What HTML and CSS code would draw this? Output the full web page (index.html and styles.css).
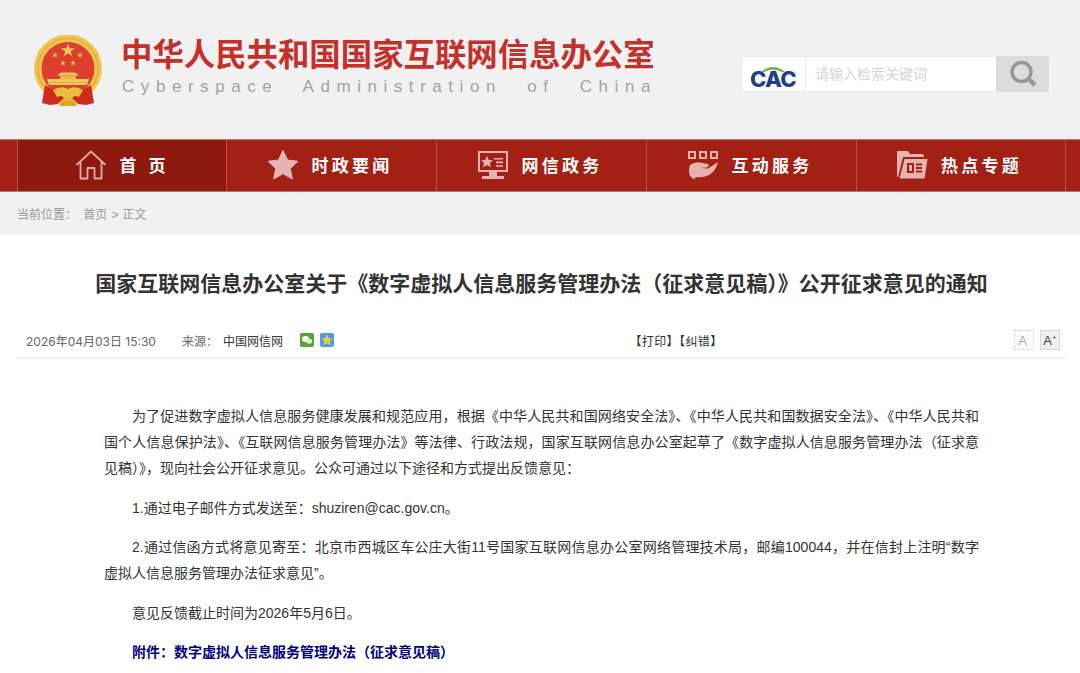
FILE: index.html
```html
<!DOCTYPE html>
<html lang="zh-CN">
<head>
  <meta charset="UTF-8" />
  <meta name="viewport" content="width=device-width, initial-scale=1.0"/>
  <title>国家互联网信息办公室</title>
  <link rel="stylesheet" href="styles.css">
</head>
<body>

  <header class="top">
    <div class="brand">
      <svg class="emblem" viewBox="0 0 68 72" width="68" height="72">
        <defs>
          <polygon id="small-star" points="0,-3 .67,-.93 2.85,-.93 1.09,.35 1.76,2.43 0,1.14 -1.76,2.43 -1.09,.35 -2.85,-.93 -.67,-.93" fill="#efc75a"/>
        </defs>
        <circle cx="34" cy="33.5" r="34" fill="#eec552"/>
        <circle cx="34" cy="33.5" r="30" fill="none" stroke="#e0ab33" stroke-width="1.2"/>
        <circle cx="34" cy="33.5" r="26.5" fill="#dc3f2e"/>
        <polygon points="34,8 35.7,13.2 41.1,13.2 36.7,16.4 38.4,21.6 34,18.35 29.6,21.6 31.3,16.4 26.9,13.2 32.3,13.2" fill="#efc75a"/>
        <use href="#small-star" x="21" y="20"/>
        <use href="#small-star" x="46" y="20"/>
        <use href="#small-star" x="29" y="28"/>
        <use href="#small-star" x="39" y="28"/>
        <path d="M23 40.5 L27 37.5 H41 L45 40.5 Z" fill="#f0ca62"/>
        <path d="M26 40.5 H42 V44 H26 Z" fill="#e8b844"/>
        <path d="M13 44 H55 L53 50 H15 Z" fill="#f0ca62"/>
        <path d="M15 47 H53 V48 H15 Z" fill="#e0ab33"/>
        <path d="M11 50 L8 68 L16 70 L24 69 L30 63 L20 55 Z" fill="#cf2a1e"/>
        <path d="M57 50 L60 68 L52 70 L44 69 L38 63 L48 55 Z" fill="#cf2a1e"/>
        <path d="M19 55 Q27 50 34 54 Q41 50 49 55 L45 62 L38 60 L34 64 L30 60 L23 62 Z" fill="#ecbc40"/>
        <path d="M27 65 H41 L43 71 H25 Z" fill="#e2a62f"/>
      </svg>
      <div class="brand-text">
        <div class="brand-cn">中华人民共和国国家互联网信息办公室</div>
        <div class="brand-en">Cyberspace Administration of China</div>
      </div>
    </div>
    <div class="search">
      <div class="search-logo">
        <svg class="search-arc" viewBox="0 0 26 7" width="26" height="7">
          <path d="M1 7 Q13 -3 25 7 L22 7 Q13 2 4 7 Z" fill="#6cb33f"/>
        </svg>
        <span class="search-cac">CAC</span>
      </div>
      <div class="search-input">请输入检索关键词</div>
      <div class="search-btn">
        <svg viewBox="0 0 28 28" width="28" height="28">
          <circle cx="12.5" cy="12" r="9.5" fill="none" stroke="#969696" stroke-width="3.4"/>
          <path d="M20.5 20 L26 25" stroke="#969696" stroke-width="4.4"/>
        </svg>
      </div>
    </div>
  </header>

  <nav class="nav">
    <a class="nav-item active">
      <svg viewBox="0 0 32 30" width="32" height="30">
        <path d="M1.5 15 L16 1.5 L30.5 15 M5.5 12 V28.5 H12.5 V18 H19.5 V28.5 H26.5 V12" fill="none" stroke="#e2aaa6" stroke-width="1.8" stroke-linejoin="round"/>
      </svg>
      <span class="nav-label home">首页</span>
    </a>
    <a class="nav-item">
      <svg viewBox="0 0 32 32" width="32" height="32">
        <path d="M16 1.5 L20.6 11 L31 12.3 L23.4 19.5 L25.4 30 L16 24.8 L6.6 30 L8.6 19.5 L1 12.3 L11.4 11 Z" fill="#e5b3b0" stroke="#e5b3b0" stroke-linejoin="round"/>
      </svg>
      <span class="nav-label">时政要闻</span>
    </a>
    <a class="nav-item">
      <svg viewBox="0 0 32 30" width="32" height="30">
        <path d="M1 1 H31 V22 H1 Z M3 3 V20 H29 V3 Z" fill="#e5b3b0" fill-rule="evenodd"/>
        <polygon points="10,6 11.8,10 16,10.3 12.8,13 14,17.2 10,15 6,17.2 7.2,13 4,10.3 8.2,10" fill="#e5b3b0"/>
        <path d="M17 8 H26 V9.6 H17 Z M19 11.6 H26 V13.2 H19 Z M19 15.2 H26 V16.8 H19 Z" fill="#e5b3b0"/>
        <path d="M12 22 H20 V26 H12 Z M5 26 H27 V29 H5 Z" fill="#e5b3b0"/>
      </svg>
      <span class="nav-label">网信政务</span>
    </a>
    <a class="nav-item">
      <svg viewBox="0 0 32 30" width="32" height="30">
        <path d="M1 1 H9 V9 H1 Z M3 3 V7 H7 V3 Z M12 1 H20 V9 H12 Z M14 3 V7 H18 V3 Z M23 1 H31 V9 H23 Z M25 3 V7 H29 V3 Z" fill="#e5b3b0" fill-rule="evenodd"/>
        <path d="M3 15 Q9 11 15 13 L21 14 Q23 15.5 20 17.5 L13 18 L21 18.5 L31 12 Q29 21 22 25 Q16 28 9 27 L7 29.5 L3 26 Q1 20 3 15 Z" fill="#e5b3b0"/>
      </svg>
      <span class="nav-label">互动服务</span>
    </a>
    <a class="nav-item">
      <svg viewBox="0 0 32 30" width="32" height="30">
        <path d="M1 1 H12 L14 4 H26 Q28 4 28 7 H7 L2 27 L1 27 Z" fill="#e5b3b0"/>
        <path d="M8.5 9 H31.5 L28.5 28.5 H3.5 Z" fill="#e5b3b0"/>
        <path d="M11 13 H18 V23 H11 Z M13 15 V21 H16 V15 Z" fill="#a32014" fill-rule="evenodd"/>
        <path d="M20 13.5 H26 V15.5 H20 Z M20 17 H26 V19 H20 Z M20 20.5 H26 V22.5 H20 Z" fill="#a32014"/>
      </svg>
      <span class="nav-label">热点专题</span>
    </a>
  </nav>

  <div class="crumb">
    <span class="crumb-label">当前位置：</span>
    <span class="crumb-path">首页 &gt; 正文</span>
  </div>

  <main class="article">
    <h1>国家互联网信息办公室关于《数字虚拟人信息服务管理办法（征求意见稿）》公开征求意见的通知</h1>

    <div class="meta">
      <div class="meta-left">
        <span class="meta-date">2026年04月03日 15:30</span>
        <span class="meta-src">来源：</span>
        <span class="meta-name">中国网信网</span>
        <span class="share share-wx">
          <svg viewBox="0 0 14 14" width="14" height="14">
            <ellipse cx="5.6" cy="6" rx="3.6" ry="3" fill="#fff"/>
            <ellipse cx="9.2" cy="8.2" rx="2.9" ry="2.4" fill="#e4f2dc"/>
          </svg>
        </span>
        <span class="share share-qq">
          <svg viewBox="0 0 14 14" width="14" height="14">
            <polygon points="7,1.5 8.7,5.2 12.7,5.6 9.7,8.3 10.6,12.3 7,10.2 3.4,12.3 4.3,8.3 1.3,5.6 5.3,5.2" fill="#f6c944"/>
          </svg>
        </span>
      </div>
      <div class="meta-mid">【打印】【纠错】</div>
      <div class="meta-right">
        <span class="font-btn minus">A<sup>-</sup></span>
        <span class="font-btn plus">A<sup>+</sup></span>
      </div>
    </div>

    <div class="body">
      <p>为了促进数字虚拟人信息服务健康发展和规范应用，根据《中华人民共和国网络安全法》、《中华人民共和国数据安全法》、《中华人民共和国个人信息保护法》、《互联网信息服务管理办法》等法律、行政法规，国家互联网信息办公室起草了《数字虚拟人信息服务管理办法（征求意见稿）》，现向社会公开征求意见。公众可通过以下途径和方式提出反馈意见：</p>
      <p>1.通过电子邮件方式发送至：shuziren@cac.gov.cn。</p>
      <p>2.通过信函方式将意见寄至：北京市西城区车公庄大街11号国家互联网信息办公室网络管理技术局，邮编100044，并在信封上注明“数字虚拟人信息服务管理办法征求意见”。</p>
      <p>意见反馈截止时间为2026年5月6日。</p>
      <p class="attach">附件：数字虚拟人信息服务管理办法（征求意见稿）</p>
    </div>
  </main>

</body>
</html>
```

FILE: styles.css
```css
body {
  margin: 0;
  font-family: "Liberation Sans", "Noto Sans CJK SC", sans-serif;
  background-color: #fff;
  color: #333;
}

.top {
  height: 139px;
  background-color: #f1f1f1;
  display: flex;
  justify-content: space-between;
  align-items: flex-start;
  padding: 0 31px 0 34px;
}

.brand {
  display: flex;
  padding-top: 35px;
}

.emblem {
  display: block;
}

.brand-text {
  margin-left: 19px;
  margin-top: 2px;
}

.brand-cn {
  font-size: 31.4px;
  line-height: 38px;
  font-weight: 700;
  color: #c4302a;
  white-space: nowrap;
}

.brand-en {
  font-size: 17px;
  line-height: 20px;
  margin: 2px 0 0 1px;
  letter-spacing: 6.55px;
  word-spacing: 14px;
  color: #a3a3a3;
  white-space: nowrap;
}

.search {
  margin-top: 56px;
  display: flex;
  height: 36px;
  width: 308px;
  border-radius: 2px;
  background-color: #fff;
  overflow: hidden;
  box-shadow: 0 0 0 1px #eaeaea inset;
}

.search-logo {
  width: 64px;
  border-right: 1px solid #ececec;
  position: relative;
  text-align: center;
}

.search-arc {
  position: absolute;
  left: 19px;
  top: 9px;
}

.search-cac {
  display: block;
  margin-top: 11px;
  font-family: Inter, sans-serif;
  font-size: 22px;
  line-height: 24px;
  font-weight: 800;
  color: #1d3f8c;
  letter-spacing: -0.6px;
}

.search-input {
  flex: 1;
  padding-left: 9px;
  font-size: 14px;
  line-height: 36px;
  color: #d4d4d4;
}

.search-btn {
  width: 53px;
  background-color: #dcdcdc;
  display: flex;
  align-items: center;
  justify-content: center;
}

.nav {
  height: 51px;
  display: flex;
  padding: 0 14px 0 17px;
  background-color: #a32014;
  border-top: 1px solid #c9706a;
  border-bottom: 1px solid #c9706a;
}

.nav-item {
  width: 210px;
  box-sizing: border-box;
  border-left: 1px solid #bc5048;
  display: flex;
  align-items: center;
  justify-content: center;
  gap: 13px;
  padding-bottom: 2px;
  padding-right: 4px;
}

.nav-item:last-child {
  border-right: 1px solid #bc5048;
}

.nav-item.active {
  width: 209px;
  padding-right: 0;
  padding-left: 4px;
  background-color: #8e1a0f;
}

.nav-label {
  color: #fff;
  font-size: 17px;
  font-weight: 700;
  letter-spacing: 3.2px;
}

.nav-label.home {
  letter-spacing: 12px;
  margin-right: -4px;
}

.crumb {
  height: 43px;
  background-color: #f1f1f1;
  padding-left: 17px;
  font-size: 12px;
  line-height: 46px;
  color: #999;
}

.crumb-path {
  margin-left: 3px;
  word-spacing: 0.7px;
}

.article {
  padding: 0 14px 0 17px;
}

h1 {
  margin: 0;
  padding-top: 33px;
  text-align: center;
  font-size: 21px;
  line-height: 32px;
  font-weight: 700;
  color: #333;
}

.meta {
  margin-top: 25px;
  height: 30px;
  padding: 0 6px 2px 9px;
  border-bottom: 2px solid #f1f1f1;
  display: flex;
  align-items: center;
  justify-content: space-between;
  font-size: 12px;
}

.meta-left {
  display: flex;
  align-items: center;
  width: 312px;
  color: #666;
}

.meta-date {
  font-family: Inter, "Noto Sans CJK SC", sans-serif;
}

.meta-src {
  margin-left: 26px;
}

.meta-name {
  margin-left: 5px;
  color: #333;
}

.share {
  width: 14px;
  height: 14px;
  border-radius: 2px;
  display: block;
  margin-left: 6px;
}

.share-wx {
  margin-left: 17px;
  background-color: #55a636;
}

.share-qq {
  background-color: #4d9ee0;
}

.meta-mid {
  color: #333;
  letter-spacing: 0.4px;
}

.meta-right {
  display: flex;
  gap: 6px;
  width: 46px;
}

.font-btn {
  width: 20px;
  height: 20px;
  box-sizing: border-box;
  font-size: 13px;
  line-height: 20px;
  text-align: center;
  color: #aaa;
  border: 1px dotted #ccc;
}

.font-btn sup {
  font-size: 8px;
  line-height: 0;
}

.font-btn.plus {
  color: #444;
  background-color: #f0f0f0;
  border: 1px solid #d8d8d8;
}

.body {
  padding: 44px 87px 0 87px;
  font-size: 14px;
  line-height: 26px;
  color: #333;
}

.body p {
  margin: 0 0 13.5px;
  text-indent: 28px;
  text-align: justify;
}

.body .attach {
  color: #000080;
  font-weight: 700;
}
```
